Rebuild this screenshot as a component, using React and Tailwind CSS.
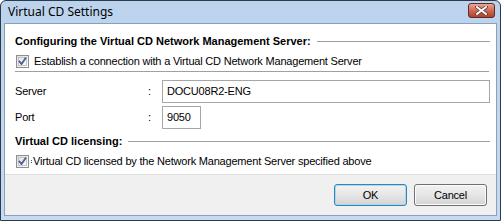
import React from "react"

function CheckBox() {
  return (
    <span className="relative inline-block w-[13px] h-[13px] shrink-0 border border-[#8e8f8f] bg-gradient-to-br from-[#dcdcdc] to-[#ffffff]">
      <span className="absolute inset-[1px] border border-[#c6c6c6] bg-gradient-to-br from-[#e6e6e6] to-[#fbfbfb]" />
      <svg className="absolute left-[1px] top-[1px]" width="9" height="9" viewBox="0 0 9 9">
        <path d="M1.5 4.5 L3.5 7 L7.5 1.2" fill="none" stroke="#3d4f8c" strokeWidth="1.8" strokeLinejoin="round" strokeLinecap="round" />
        <path d="M1.8 4.6 L3.5 6.6 L7.2 1.4" fill="none" stroke="#6f86c6" strokeWidth="0.6" />
      </svg>
    </span>
  )
}

function Group({ title }) {
  return (
    <div className="flex items-center h-[14px]">
      <span className="font-bold text-black whitespace-nowrap tracking-normal">{title}</span>
      <span className="flex-1 ml-[6px] h-px bg-[#a0a0a0]" />
    </div>
  )
}

function Field({ label, value, width }) {
  return (
    <div className="flex items-center h-[23px]">
      <span className="w-[133px]">{label}</span>
      <span className="w-[14px]">:</span>
      <div className={"h-[23px] border border-[#a6a6a6] bg-white pl-[4px] pt-[3px] leading-[14px] " + width}>
        {value}
      </div>
    </div>
  )
}

function Button({ children, primary }) {
  return (
    <button
      type="button"
      className={
        "w-[73px] h-[22px] rounded-[3px] border text-[11px] leading-[13px] text-black bg-gradient-to-b from-[#f2f2f2] via-[#e6e6e6] to-[#d3d3d3] " +
        (primary ? "border-[#3c7fb1] shadow-[inset_0_0_0_1px_#9fdcf6]" : "border-[#707070] shadow-[inset_0_0_0_1px_#fcfcfc]")
      }
    >
      {children}
    </button>
  )
}

export default function App() {
  return (
    <div
      className="w-[501px] h-[221px] flex flex-col bg-gradient-to-b from-[#bcd3ee] to-[#c6daf1] border border-[#2d3a4a] rounded-t-[6px] overflow-hidden text-[11px] text-black tracking-[-0.2px]"
      style={{ fontFamily: '"Liberation Sans", Arial, sans-serif' }}
    >
      {/* Title bar */}
      <div className="h-[22px] shrink-0 flex items-center justify-between pl-[7px] pr-[5px]">
        <span className="text-[12px] text-black tracking-normal" style={{ fontFamily: '"Noto Sans", "Open Sans", sans-serif' }}>
          Virtual CD Settings
        </span>
        <span className="relative w-[27px] h-[15px] mt-[-3px] rounded-[3px] border border-[#5b2b28] bg-gradient-to-b from-[#e7a896] via-[#cf6a55] to-[#b2402c] flex items-center justify-center">
          <svg width="13" height="9" viewBox="0 0 13 9">
            <path d="M2 1 L11 8 M11 1 L2 8" stroke="#4a2a28" strokeWidth="3.4" strokeLinecap="square" />
            <path d="M2 1 L11 8 M11 1 L2 8" stroke="#ffffff" strokeWidth="2" strokeLinecap="square" />
          </svg>
        </span>
      </div>

      {/* Client area */}
      <div className="flex-1 flex flex-col mx-[3px] mb-[4px] border border-[#8aa0bb] bg-white">
        <div className="flex-1 flex flex-col pl-[10px] pr-[6px] pt-[10px]">
          <Group title="Configuring the Virtual CD Network Management Server:" />
          <div className="flex items-center h-[14px] mt-[6px] pl-[1px]">
            <CheckBox />
            <span className="ml-[5px]">Establish a connection with a Virtual CD Network Management Server</span>
          </div>
          <div className="h-px bg-[#a0a0a0] mt-[3px] mr-[1px]" />
          <div className="mt-[8px] flex flex-col gap-[3px]">
            <Field label="Server" value="DOCU08R2-ENG" width="flex-1" />
            <Field label="Port" value="9050" width="w-[39px]" />
          </div>
          <div className="mt-[5px]">
            <Group title="Virtual CD licensing:" />
          </div>
          <div className="flex items-center h-[14px] mt-[6px] pl-[1px]">
            <CheckBox />
            <span className="ml-[2px] mt-[1px] h-[3px] border-l border-dotted border-[#555]" />
            <span className="ml-[1px]">
              Virtual CD licensed by the Network Management Server specified above
            </span>
          </div>
        </div>
        <div className="h-[41px] shrink-0 border-t border-[#dfdfdf] bg-[#f0f0f0] flex items-start pt-[9px] justify-end gap-[7px] pr-[9px]">
          <Button primary>OK</Button>
          <Button>Cancel</Button>
        </div>
      </div>
    </div>
  )
}
